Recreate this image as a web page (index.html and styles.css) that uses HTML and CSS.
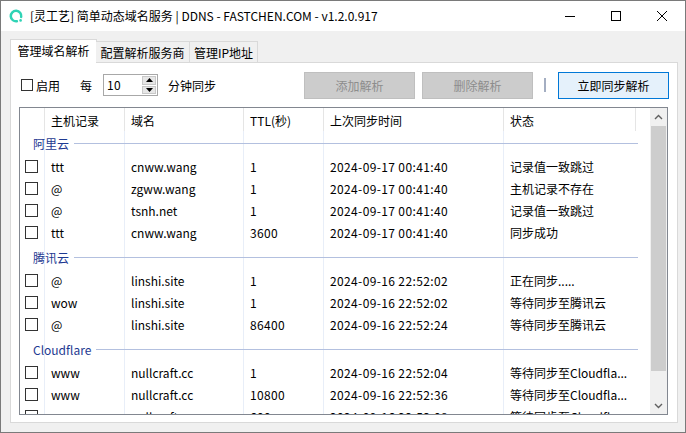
FILE: index.html
```html
<!DOCTYPE html>
<html lang="zh-CN">
<head>
<meta charset="utf-8">
<title>灵工艺 DDNS</title>
<link rel="stylesheet" href="styles.css">
</head>
<body>
<div class="window">
  <div class="titlebar">
    <svg class="logo" width="14" height="14" viewBox="0 0 14 14">
      <path d="M7.9 12.2 A5.25 5.25 0 1 1 12.2 7.9" fill="none" stroke="#2fd3b5" stroke-width="2.5" stroke-linecap="round"/>
      <circle cx="11.6" cy="11.4" r="1.3" fill="#2fd3b5"/>
    </svg>
    <div class="title">[灵工艺] 简单动态域名服务 | DDNS - FASTCHEN.COM - v1.2.0.917</div>
    <div class="controls">
      <div class="ctl"><svg width="10" height="10" viewBox="0 0 10 10"><path d="M0 5.5H10" stroke="#000" stroke-width="1"/></svg></div>
      <div class="ctl"><svg width="10" height="10" viewBox="0 0 10 10"><rect x="0.5" y="0.5" width="9" height="9" fill="none" stroke="#000" stroke-width="1"/></svg></div>
      <div class="ctl"><svg width="10" height="10" viewBox="0 0 10 10"><path d="M0 0L10 10M10 0L0 10" stroke="#000" stroke-width="1"/></svg></div>
    </div>
  </div>
  <div class="client">
    <div class="tabs">
      <div class="tab active">管理域名解析</div>
      <div class="tab t2">配置解析服务商</div>
      <div class="tab t3">管理IP地址</div>
    </div>
    <div class="page">
      <div class="toolbar">
        <span class="cb small"></span>
        <span class="lbl-enable">启用</span>
        <span class="lbl-every">每</span>
        <div class="spin">
          <span class="spin-val">10</span>
          <div class="spin-btns">
            <span class="spin-btn"><svg width="7" height="4" viewBox="0 0 7 4"><path d="M3.5 0L7 4H0Z" fill="#000"/></svg></span>
            <span class="spin-btn"><svg width="7" height="4" viewBox="0 0 7 4"><path d="M0 0H7L3.5 4Z" fill="#000"/></svg></span>
          </div>
        </div>
        <span class="lbl-min">分钟同步</span>
        <button class="btn disabled first">添加解析</button>
        <button class="btn disabled second">删除解析</button>
        <span class="sep"></span>
        <button class="btn primary">立即同步解析</button>
      </div>
      <div class="list">
        <div class="lv">
          <div class="lv-head">
            <div class="hc"></div>
            <div class="hc">主机记录</div>
            <div class="hc">域名</div>
            <div class="hc">TTL(秒)</div>
            <div class="hc">上次同步时间</div>
            <div class="hc">状态</div>
            <div class="hc"></div>
          </div>
          <div class="lv-body">
            <div class="group first-group">阿里云</div>
            <div class="row"><span class="cb"></span><span>ttt</span><span>cnww.wang</span><span class="num">1</span><span class="num">2024-09-17 00:41:40</span><span>记录值一致跳过</span></div>
            <div class="row"><span class="cb"></span><span>@</span><span>zgww.wang</span><span class="num">1</span><span class="num">2024-09-17 00:41:40</span><span>主机记录不存在</span></div>
            <div class="row"><span class="cb"></span><span>@</span><span>tsnh.net</span><span class="num">1</span><span class="num">2024-09-17 00:41:40</span><span>记录值一致跳过</span></div>
            <div class="row"><span class="cb"></span><span>ttt</span><span>cnww.wang</span><span class="num">3600</span><span class="num">2024-09-17 00:41:40</span><span>同步成功</span></div>
            <div class="group">腾讯云</div>
            <div class="row"><span class="cb"></span><span>@</span><span>linshi.site</span><span class="num">1</span><span class="num">2024-09-16 22:52:02</span><span>正在同步.....</span></div>
            <div class="row"><span class="cb"></span><span>wow</span><span>linshi.site</span><span class="num">1</span><span class="num">2024-09-16 22:52:02</span><span>等待同步至腾讯云</span></div>
            <div class="row"><span class="cb"></span><span>@</span><span>linshi.site</span><span class="num">86400</span><span class="num">2024-09-16 22:52:24</span><span>等待同步至腾讯云</span></div>
            <div class="group">Cloudflare</div>
            <div class="row"><span class="cb"></span><span>www</span><span>nullcraft.cc</span><span class="num">1</span><span class="num">2024-09-16 22:52:04</span><span>等待同步至Cloudfla...</span></div>
            <div class="row"><span class="cb"></span><span>www</span><span>nullcraft.cc</span><span class="num">10800</span><span class="num">2024-09-16 22:52:36</span><span>等待同步至Cloudfla...</span></div>
            <div class="row"><span class="cb"></span><span>www</span><span>nullcraft.cc</span><span class="num">600</span><span class="num">2024-09-16 22:53:08</span><span>等待同步至Cloudfla...</span></div>
          </div>
        </div>
        <div class="vscroll">
          <div class="sb-btn"><svg width="9" height="6" viewBox="0 0 9 6"><path d="M1 5L4.5 1.5L8 5" fill="none" stroke="#606060" stroke-width="1.4"/></svg></div>
          <div class="sb-track"><div class="sb-thumb"></div></div>
          <div class="sb-btn"><svg width="9" height="6" viewBox="0 0 9 6"><path d="M1 1L4.5 4.5L8 1" fill="none" stroke="#606060" stroke-width="1.4"/></svg></div>
        </div>
      </div>
    </div>
  </div>
</div>
</body>
</html>
```
FILE: styles.css
```css
* { box-sizing: border-box; }
html, body { margin: 0; padding: 0; }
body {
  font-family: "Noto Sans CJK SC", "Noto Sans", sans-serif;
  font-size: 12px;
  color: #000;
  background: #fff;
}
.window {
  width: 686px;
  height: 433px;
  border: 1px solid #7a7a7a;
  display: flex;
  flex-direction: column;
  background: #f0f0f0;
  overflow: hidden;
}
.titlebar {
  height: 30px;
  flex: none;
  background: #fff;
  display: flex;
  align-items: center;
}
.logo { margin-left: 8px; flex: none; }
.title { margin-left: 7px; flex: 1; white-space: nowrap; line-height: 30px; }
.controls { display: flex; align-self: stretch; }
.ctl {
  width: 46px;
  display: flex;
  align-items: center;
  justify-content: center;
}
.ctl svg { display: block; }

.client {
  flex: 1;
  min-height: 0;
  display: flex;
  flex-direction: column;
  padding: 8px 7px 9px 9px;
}
.tabs {
  display: flex;
  align-items: flex-end;
  height: 24px;
  flex: none;
  margin-bottom: -1px;
  position: relative;
  z-index: 1;
}
.tab {
  height: 21px;
  margin-bottom: 1px;
  border: 1px solid #d9d9d9;
  border-bottom: none;
  background: #f0f0f0;
  display: flex;
  align-items: center;
  justify-content: center;
  white-space: nowrap;
}
.tab.active {
  height: 24px;
  margin-bottom: 0;
  width: 87px;
  background: #fff;
  padding-bottom: 2px;
}
.tab.t2 { width: 94px; margin-left: -1px; border-left: none; }
.tab.t3 { width: 69px; margin-left: -1px; }

.page {
  flex: 1;
  min-height: 0;
  background: #fff;
  border: 1px solid #d9d9d9;
  display: flex;
  flex-direction: column;
}
.toolbar {
  height: 44px;
  flex: none;
  display: flex;
  align-items: center;
  padding: 0 8px 0 10px;
  white-space: nowrap;
}
.cb {
  width: 13px;
  height: 13px;
  border: 1px solid #333;
  background: #fff;
  display: block;
}
.cb.small { width: 12px; height: 12px; }
.lbl-enable { margin-left: 3px; }
.lbl-every { margin-left: 20px; }
.spin {
  margin-left: 11px;
  width: 55px;
  height: 22px;
  border: 1px solid #a8a8a8;
  display: flex;
  align-items: center;
  justify-content: space-between;
  padding: 0 0 0 3px;
  background: #fff;
}
.spin-val { line-height: 20px; letter-spacing: 0.4px; }
.spin-btns {
  width: 15px;
  align-self: stretch;
  display: flex;
  flex-direction: column;
  gap: 1px;
  padding: 1px 1px 1px 0;
}
.spin-btn {
  flex: 1;
  background: #e6e6e6;
  border: 1px solid #c8c8c8;
  display: flex;
  align-items: center;
  justify-content: center;
}
.spin-btn svg { display: block; }
.lbl-min { margin-left: 10px; }
.btn {
  width: 111px;
  height: 27px;
  font: inherit;
  border: 1px solid #bfbfbf;
  background: #cccccc;
  color: #8d8d8d;
  padding: 0;
  display: flex;
  align-items: center;
  justify-content: center;
}
.btn.first { margin-left: auto; }
.btn.second { margin-left: 7px; }
.sep {
  width: 2px;
  height: 14px;
  background: #a4aec2;
  margin: 0 12px 0 11px;
}
.btn.primary {
  background: #e5f1fb;
  border-color: #0078d7;
  color: #000;
}

.list {
  flex: 1;
  min-height: 0;
  margin: 0 9px 7px 8px;
  border: 1px solid #828790;
  background: #fff;
  display: flex;
  overflow: hidden;
}
.lv {
  flex: 1;
  min-width: 0;
  min-height: 0;
  display: flex;
  flex-direction: column;
  overflow: hidden;
}
.lv-head, .row {
  display: grid;
  grid-template-columns: 24px 80px 119px 80px 180px 132px 1fr;
}
.lv-head { height: 23px; flex: none; }
.hc {
  padding: 3px 0 0 6px;
  line-height: 20px;
  white-space: nowrap;
}
.hc + .hc { border-left: 1px solid #e5e5e5; }
.lv-body {
  flex: 1;
  min-height: 0;
  overflow: hidden;
  background-image:
    linear-gradient(#e8eef8, #e8eef8),
    linear-gradient(#e8eef8, #e8eef8),
    linear-gradient(#e8eef8, #e8eef8),
    linear-gradient(#e8eef8, #e8eef8),
    linear-gradient(#e8eef8, #e8eef8);
  background-size: 1px 100%;
  background-repeat: no-repeat;
  background-position: 24px 0, 104px 0, 223px 0, 303px 0, 483px 0;
}
.group {
  height: 24px;
  margin-top: 2px;
  display: flex;
  align-items: center;
  padding-left: 13px;
  color: #1e3991;
  white-space: nowrap;
}
.group.first-group { margin-top: 0; }
.group::after {
  content: "";
  flex: 1;
  height: 1px;
  background: #b3c0df;
  margin: 0 12px 0 5px;
}
.row { height: 22px; align-items: center; }
.row > span { padding-left: 7px; white-space: nowrap; overflow: hidden; }
.row > .cb { margin-left: 5px; padding: 0; }
.row > .num { letter-spacing: 0.37px; }

.vscroll {
  width: 17px;
  flex: none;
  background: #f0f0f0;
  display: flex;
  flex-direction: column;
}
.sb-btn {
  height: 17px;
  flex: none;
  display: flex;
  align-items: center;
  justify-content: center;
}
.sb-btn svg { display: block; }
.sb-track { flex: 1; min-height: 0; padding: 1px 1px 0 1px; }
.sb-thumb { height: 245px; background: #cdcdcd; }
```
